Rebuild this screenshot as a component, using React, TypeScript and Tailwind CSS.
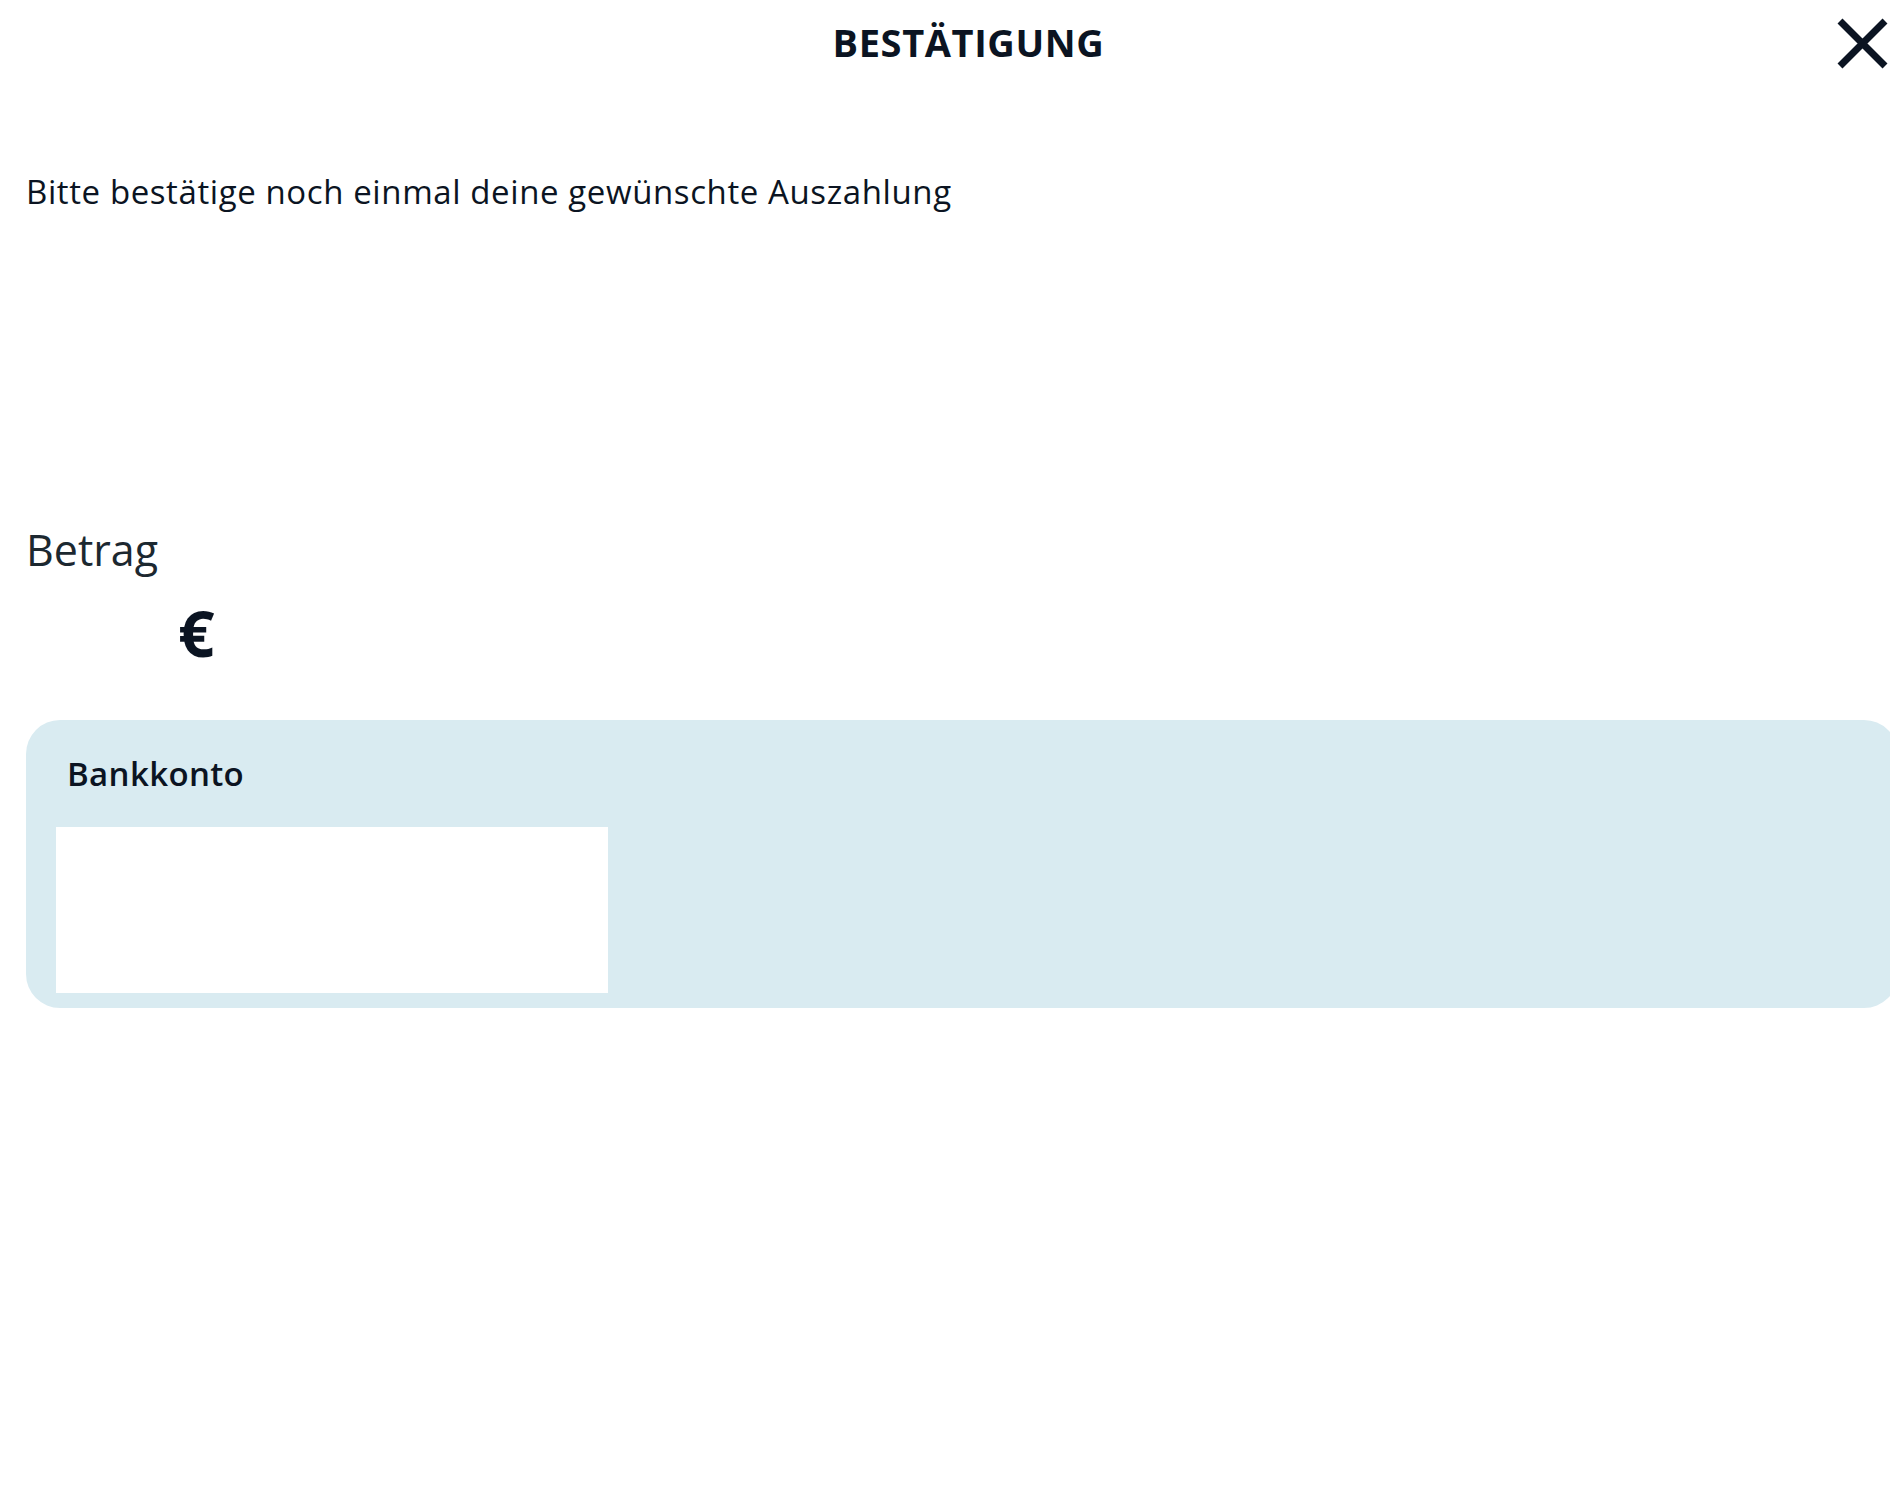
import React from "react";

export default function App() {
  return (
    <div className="relative min-h-screen w-full overflow-hidden bg-white font-['Open_Sans',sans-serif] text-[#0b1422]">
      <header className="relative h-[61px]">
        <h1 className="pt-[23px] pl-[47px] text-center text-[38px] font-bold leading-none tracking-[0.6px]">BESTÄTIGUNG</h1>
        <button className="absolute top-[18px] right-[2px] h-[51px] w-[51px]" aria-label="Schließen">
          <svg viewBox="0 0 51 51" className="h-full w-full">
            <path d="M3 3 L48 48 M48 3 L3 48" stroke="#0b1422" strokeWidth="7" strokeLinecap="butt" />
          </svg>
        </button>
      </header>

      <main className="px-[26px]">
        <p className="mt-[114px] text-[33px] leading-none tracking-[0.6px]">Bitte bestätige noch einmal deine gewünschte Auszahlung</p>

        <div className="mt-[320px]">
          <div className="text-[43px] leading-none text-[#1c2830]">Betrag</div>
          <div className="mt-[30px] flex items-start">
            <span className="w-[152px]" />
            <span className="text-[64px] font-bold leading-none">€</span>
          </div>
        </div>

        <section className="mt-[55px] w-[1872px] rounded-[34px] bg-[#d9ebf1] px-[30px] pt-[37px] pb-[15px]">
          <h2 className="pl-[11px] text-[33px] font-semibold leading-none tracking-[0.35px]">Bankkonto</h2>
          <div className="mt-[37px] h-[166px] w-[552px] bg-white" />
        </section>
      </main>
    </div>
  );
}
